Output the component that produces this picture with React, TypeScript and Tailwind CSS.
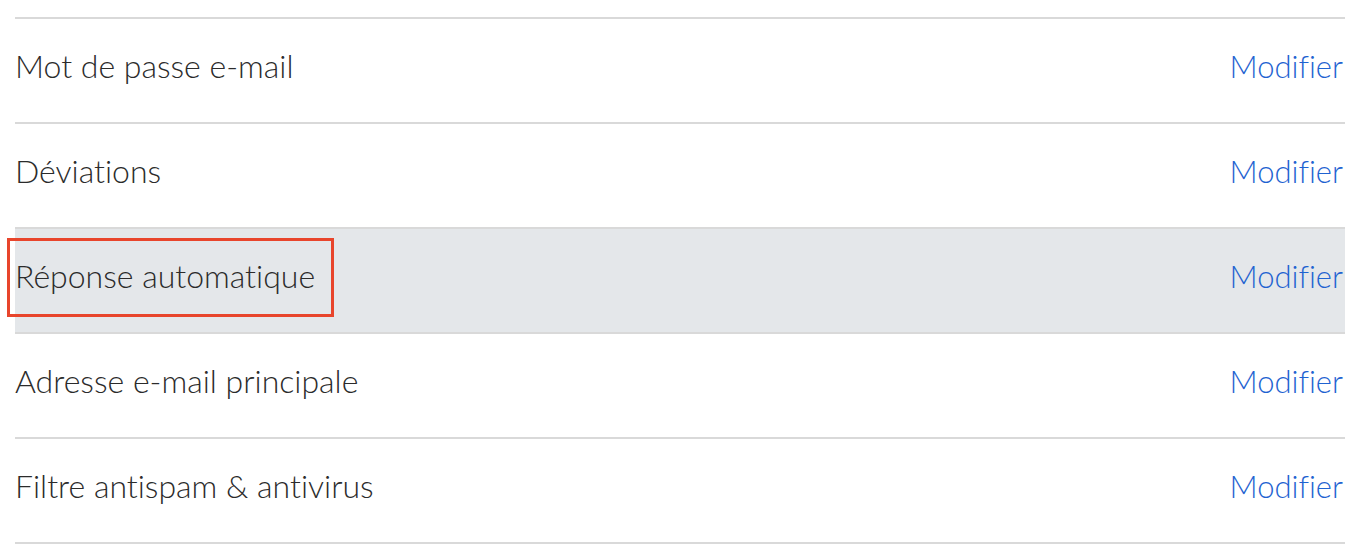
import React from "react";

const rows = [
  { label: "Mot de passe e-mail" },
  { label: "Déviations" },
  { label: "Réponse automatique", active: true },
  { label: "Adresse e-mail principale" },
  { label: "Filtre antispam & antivirus" },
];

export default function App() {
  return (
    <div className="min-h-[553px] bg-white pt-[17px] pl-[15px] font-['Lato','Open_Sans',sans-serif] [font-variant-ligatures:none]">
      <ul className="w-[1330px] border-t-2 border-[#d9d9d9]">
        {rows.map((row) => (
          <li
            key={row.label}
            className={`flex h-[105px] items-center justify-between border-b-2 border-[#d9d9d9] pb-[9px] pr-[2px] ${
              row.active ? "bg-[#e4e7ea]" : "bg-white"
            }`}
          >
            <span className="relative text-[32px] leading-[48px] font-light text-[#2b2b2b]">
              {row.label}
              {row.active && (
                <span className="absolute -left-[8px] -right-[19px] -top-[14px] -bottom-[17px] border-[3px] border-[#e8452c]" />
              )}
            </span>
            <a href="#" className="text-[31px] font-light text-[#1f63d1]">
              Modifier
            </a>
          </li>
        ))}
      </ul>
    </div>
  );
}
